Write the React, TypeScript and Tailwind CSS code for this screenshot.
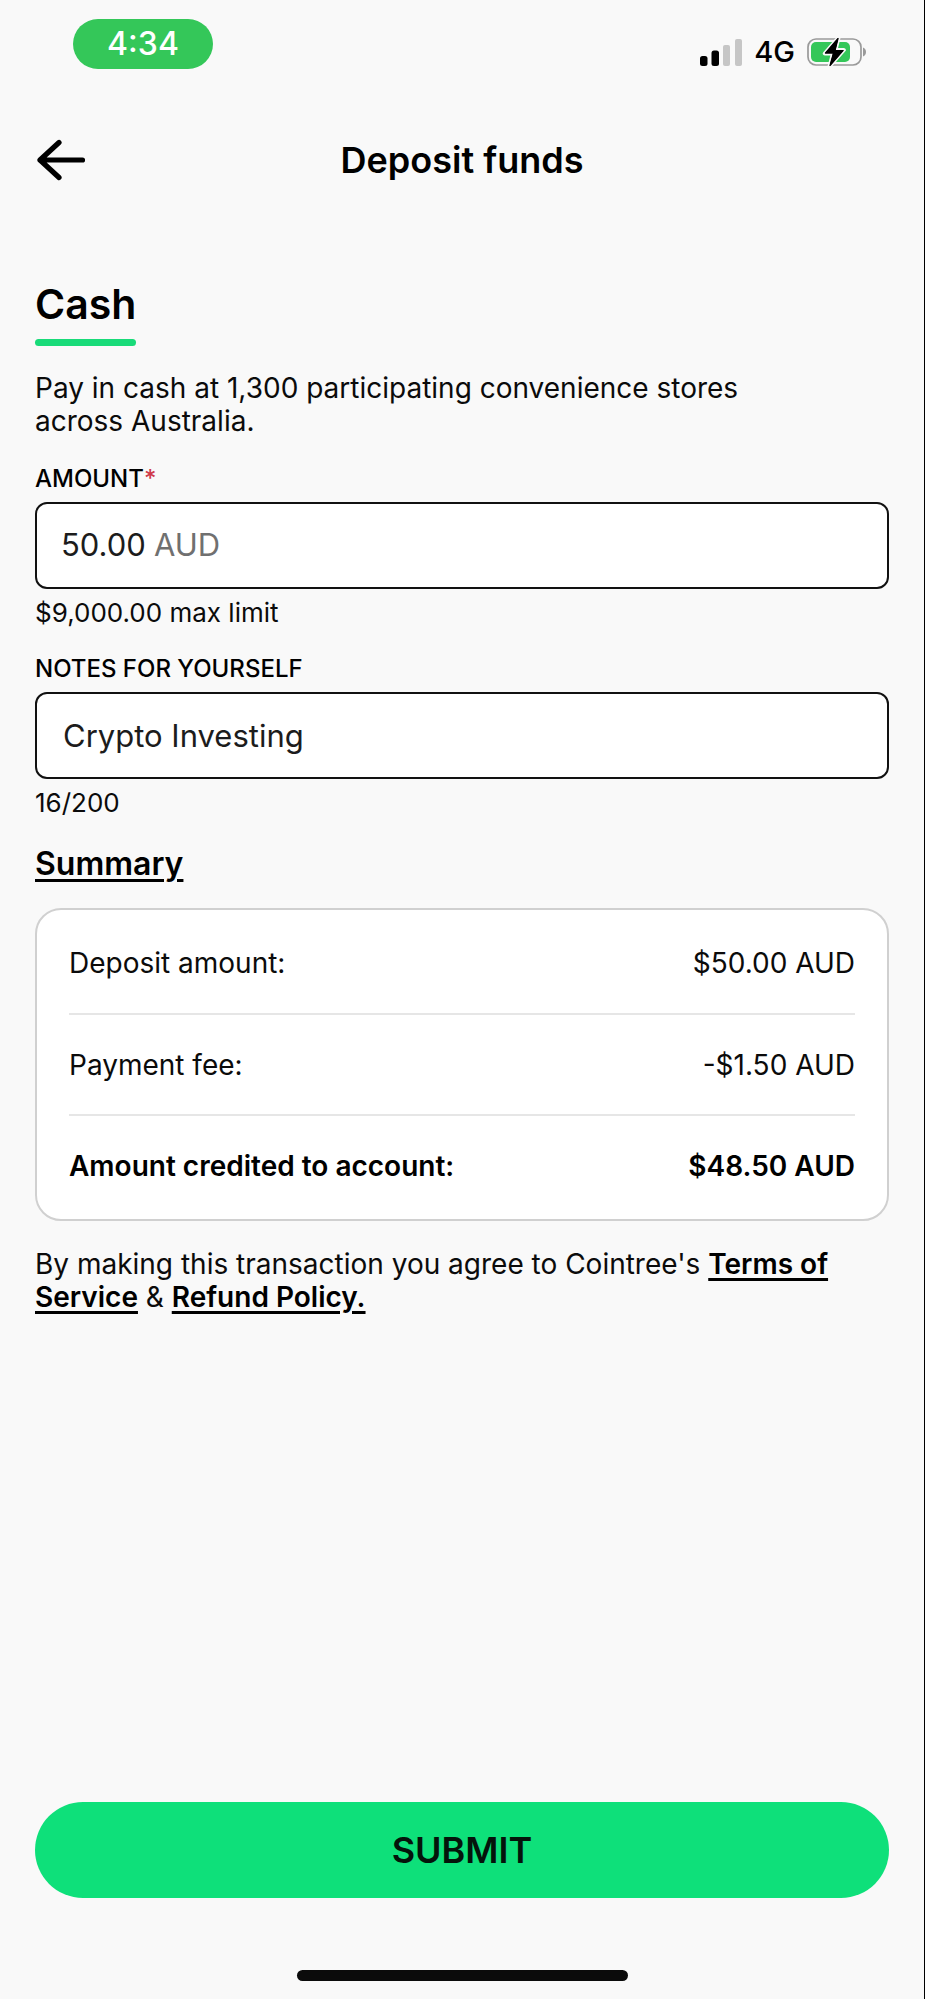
import React, { useState } from "react";

const SignalIcon: React.FC = () => (
  <svg width="42" height="27" viewBox="0 0 42 27" aria-hidden="true">
    <rect x="0" y="17" width="7.500" height="10" rx="2.500" fill="#000" />
    <rect x="11.500" y="11.500" width="7.500" height="15.500" rx="2.500" fill="#000" />
    <rect x="23" y="6" width="7" height="21" rx="2" fill="#c6c6c6" />
    <rect x="35" y="0" width="7" height="27" rx="2" fill="#c6c6c6" />
  </svg>
);

const BatteryIcon: React.FC = () => (
  <svg width="60" height="30" viewBox="0 0 60 30" aria-hidden="true">
    <rect x="1" y="2" width="53" height="26" rx="8" fill="none" stroke="#9a9a9a" strokeWidth="1.7" />
    <rect x="4" y="5" width="39" height="20" rx="5" fill="#34c759" />
    <path d="M56 10.500C58 11 59 13 59 15S58 19 56 19.500Z" fill="#9a9a9a" />
    <path
      d="M31.500 0.800 17.800 16.500H26L22.600 29.200 36.800 13H28.500Z"
      fill="#000"
      stroke="#f9f9f9"
      strokeWidth="4"
      strokeLinejoin="round"
      paintOrder="stroke"
    />
    <path
      d="M31 1.500 18.500 16H26.500L23 28.500 36 13.500H28Z"
      fill="#000"
      stroke="#000"
      strokeWidth="1.200"
      strokeLinejoin="round"
    />
  </svg>
);

const BackIcon: React.FC = () => (
  <svg
    width="52"
    height="42"
    viewBox="0 0 52 42"
    fill="none"
    stroke="#000"
    strokeWidth="5.200"
    strokeLinecap="round"
    strokeLinejoin="round"
    aria-hidden="true"
  >
    <path d="M24 3.500 5 21 24 38.500M5 21H47.500" />
  </svg>
);

const summary = [
  { label: "Deposit amount:", value: "$50.00 AUD" },
  { label: "Payment fee:", value: "-$1.50 AUD" },
  { label: "Amount credited to account:", value: "$48.50 AUD" },
];

const App: React.FC = () => {
  const [amount, setAmount] = useState("50.00");
  const [notes, setNotes] = useState("Crypto Investing");

  return (
    <div className="flex min-h-screen flex-col border-r border-black bg-[#f9f9f9] px-[35px] font-['Inter',sans-serif] text-[#0b0b0b]">
      <div className="flex h-[88px] items-start justify-between pt-[19px] pr-[22px] pl-[38px]">
        <div className="flex h-[50px] w-[140px] items-center justify-center rounded-full bg-[#34c759] text-[32px] font-medium text-white">
          4:34
        </div>
        <div className="flex h-[66px] items-center gap-3 text-[29px] font-medium text-black">
          <SignalIcon />
          <span>4G</span>
          <BatteryIcon />
        </div>
      </div>

      <header className="mt-12 grid h-12 grid-cols-[1fr_auto_1fr] items-center">
        <button type="button" aria-label="Back" className="w-fit cursor-pointer">
          <BackIcon />
        </button>
        <h1 className="text-[36px] leading-[48px] font-semibold text-black">Deposit funds</h1>
      </header>

      <form className="flex grow flex-col" onSubmit={(e) => e.preventDefault()}>
        <h2 className="mt-[94px] w-fit text-[41px] leading-[52px] font-semibold text-black">Cash</h2>
        <div className="mt-[9px] h-[7px] w-[101px] rounded-full bg-[#19db79]" />

        <p className="mt-[26px] max-w-[740px] text-[28px] leading-[33px]">
          Pay in cash at 1,300 participating convenience stores across Australia.
        </p>

        <label htmlFor="amount" className="mt-[27px] text-[24px] leading-[28px] font-medium text-black">
          AMOUNT<span className="text-[#cf3a4b]">*</span>
        </label>
        <div className="mt-[9px] flex h-[87px] items-center gap-2 rounded-xl border-2 border-[#111] bg-white px-6 text-[31px]">
          <input
            id="amount"
            className="field-sizing-content text-[#1c1c1c] outline-none"
            value={amount}
            onChange={(e) => setAmount(e.target.value)}
          />
          <span className="text-[#707070]">AUD</span>
        </div>
        <p className="mt-2 text-[26px] leading-[32px]">$9,000.00 max limit</p>

        <label htmlFor="notes" className="mt-[26px] text-[24px] leading-[28px] font-medium text-black">
          NOTES FOR YOURSELF
        </label>
        <input
          id="notes"
          className="mt-[9px] h-[87px] rounded-xl border-2 border-[#111] bg-white px-[26px] text-[31px] text-[#1c1c1c] outline-none"
          value={notes}
          maxLength={200}
          onChange={(e) => setNotes(e.target.value)}
        />
        <p className="mt-2 text-[26px] leading-[32px]">{notes.length}/200</p>

        <h3 className="mt-[25px] text-[32px] leading-[40px] font-semibold text-black underline decoration-3 underline-offset-4">
          Summary
        </h3>
        <div className="mt-6 rounded-[26px] border-2 border-[#d0d0d0] bg-white px-8 py-[3px]">
          <table className="w-full text-[28px]">
            <tbody>
              {summary.map(({ label, value }) => (
                <tr
                  key={label}
                  className="h-[101px] border-b-2 border-[#e6e6e6] font-normal last:border-b-0 last:font-semibold last:text-black"
                >
                  <th scope="row" className="text-left [font-weight:inherit]">
                    {label}
                  </th>
                  <td className="text-right">{value}</td>
                </tr>
              ))}
            </tbody>
          </table>
        </div>

        <p className="mt-[27px] text-[28px] leading-[33px]">
          By making this transaction you agree to Cointree's{" "}
          <a href="#terms" className="font-semibold text-black underline decoration-3 underline-offset-4">
            Terms of Service
          </a>{" "}
          &{" "}
          <a href="#refunds" className="font-semibold text-black underline decoration-3 underline-offset-4">
            Refund Policy.
          </a>
        </p>

        <button
          type="submit"
          className="mt-auto h-24 cursor-pointer rounded-full bg-[#0ee07a] text-[36px] font-semibold text-[#04140b]"
        >
          SUBMIT
        </button>
      </form>

      <div className="mx-auto mt-[72px] mb-[18px] h-[11px] w-[331px] rounded-full bg-[#0b0b0b]" />
    </div>
  );
};

export default App;
